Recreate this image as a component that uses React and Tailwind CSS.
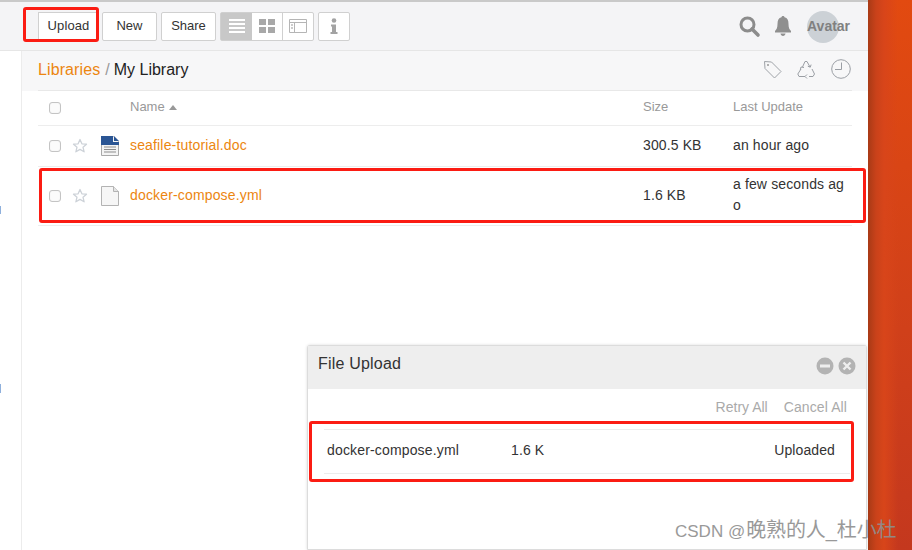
import React from "react";

function Btn({ children, className = "" }) {
  return (
    <button className={"h-[29px] bg-white border border-[#d0d0d0] rounded-[2px] text-[13px] text-[#333] flex items-center justify-center " + className}>
      {children}
    </button>
  );
}

function Star() {
  return (
    <svg width="16" height="16" viewBox="0 0 16 16" fill="none" stroke="#cdd2d8" strokeWidth="1.3" strokeLinejoin="round">
      <path d="M8 1.500l1.900 4.300 4.600.4-3.500 3 1.100 4.600L8 11.400l-4.100 2.400 1.100-4.600-3.500-3 4.600-.4z" />
    </svg>
  );
}

function Check() {
  return <span className="block w-[12px] h-[12px] border border-[#c4c4c4] rounded-[3px] bg-[#fbfbfb] shadow-[inset_0_0_1px_#ddd]" />;
}

function DocIcon() {
  return (
    <svg width="18" height="20" viewBox="0 0 18 20">
      <path d="M.5.5H12.500L17.500 5.500V19.500H.5z" fill="#f4f4f4" stroke="#a9a9a9" />
      <path d="M0 0H12V6H18V9H0z" fill="#2a5594" />
      <path d="M13 0L18 5H13z" fill="#2a5594" />
      <path d="M3 11H15M3 13.500H15M3 16H15" stroke="#8d8d8d" />
    </svg>
  );
}

function BlankIcon() {
  return (
    <svg width="18" height="20" viewBox="0 0 18 20">
      <path d="M.5.5H12.500L17.500 5.500V19.500H.5z" fill="#f6f6f6" stroke="#b3b3b3" />
      <path d="M12.500.5V5.500H17.500" fill="#e4e4e4" stroke="#b3b3b3" />
    </svg>
  );
}

function FileRow({ icon, name, size, time, h }) {
  return (
    <div className={"flex items-center border-b border-[#ededed] text-[14px] " + h}>
      <div className="w-[11px]" />
      <Check />
      <div className="w-[11px]" />
      <Star />
      <div className="w-[5px]" />
      <div className="w-[37px] pl-[8px] flex justify-start">{icon}</div>
      <div className="w-[513px] text-[#ec8610] tracking-[0.16px] -translate-y-[1px]">{name}</div>
      <div className="w-[90px] text-[#333] tracking-[0.12px] -translate-y-[1px]">{size}</div>
      <div className="w-[114px] text-[#333] leading-[21px] break-all tracking-[0.13px] -translate-y-[1px]">{time}</div>
    </div>
  );
}

export default function App() {
  return (
    <div className="relative w-[912px] h-[550px] overflow-hidden flex bg-white font-['Liberation_Sans',Arial,sans-serif]">
      <div className="w-[868px] h-full flex flex-col shrink-0">
        <div className="h-[51px] shrink-0 bg-[#f4f4f6] border-t-2 border-t-[#c9c9c9] border-b border-b-[#e6e6e6] flex items-center pl-[38px] pr-[29px]">
          <Btn className="w-[60px] border-r-0 rounded-none tracking-[0.1px]">Upload</Btn>
          <Btn className="w-[55px] ml-[4px]">New</Btn>
          <Btn className="w-[55px] ml-[4px]">Share</Btn>
          <div className="ml-[4px] w-[94px] h-[29px] flex border border-[#d0d0d0] rounded-[2px] bg-white">
            <div className="w-[31px] bg-[#c8c8c8] flex items-center justify-center">
              <svg width="16" height="14" viewBox="0 0 16 14" fill="#fff"><path d="M0 0h16v2H0zM0 4h16v2H0zM0 8h16v2H0zM0 12h16v2H0z" /></svg>
            </div>
            <div className="w-[31px] border-r border-[#d0d0d0] flex items-center justify-center">
              <svg width="16" height="14" viewBox="0 0 16 14" fill="#a8a8a8"><path d="M0 0h7v6H0zM9 0h7v6H9zM0 8h7v6H0zM9 8h7v6H9z" /></svg>
            </div>
            <div className="flex-1 flex items-center justify-center">
              <svg width="18" height="14" viewBox="0 0 18 14" fill="none" stroke="#b5b5b5"><path d="M.5.500h17v13H.5zM.5 3.500h17M5.500 3.500v10" /><path d="M2 6h2M2 9h2" stroke="#999" /></svg>
            </div>
          </div>
          <Btn className="w-[32px] ml-[4px]">
            <svg width="8" height="16" viewBox="0 0 8 16" fill="#a3a3a3"><circle cx="4" cy="2.500" r="2.300" /><path d="M1 6.500h5V14h1.500v2H.5v-2H2V8.500H1z" /></svg>
          </Btn>
          <div className="flex-1" />
          <svg width="22" height="22" viewBox="0 0 22 22" fill="none" stroke="#8c8c8c" className="mr-[13px] mt-[1px]">
            <circle cx="8.500" cy="8.500" r="6.500" strokeWidth="3" />
            <path d="M13 13L19 19" strokeWidth="3.600" strokeLinecap="round" />
          </svg>
          <svg width="18" height="20" viewBox="0 0 18 20" fill="#8f8f8f" className="mr-[15px]">
            <path d="M9 0c1 0 1.500.6 1.500 1.300C13.500 2 14.500 4.500 14.500 8c0 4 1 5.500 2.500 7v1.500H1V15c1.500-1.500 2.500-3 2.500-7 0-3.500 1-6 4-6.700C7.500.6 8 0 9 0z" />
            <path d="M6.500 17.500h5C11.300 19 10.300 20 9 20s-2.300-1-2.500-2.500z" />
          </svg>
          <div className="w-[32px] h-[32px] rounded-full bg-[#ccd1d6] flex items-center justify-start text-[14px] font-bold text-[#808080] whitespace-nowrap mt-[1px]">
            Avatar
          </div>
        </div>
        <div className="flex-1 flex min-h-0">
          <div className="w-[22px] shrink-0 border-r border-[#ececec] bg-white relative">
            <span className="absolute left-0 top-[155px] w-[1px] h-[8px] bg-[#8fb0dc]" />
            <span className="absolute left-0 top-[333px] w-[1px] h-[9px] bg-[#8fb0dc]" />
          </div>
          <div className="flex-1 flex flex-col min-w-0 relative">
            <div className="h-[40px] shrink-0 bg-[#f7f7f8] pl-[16px] pr-[16px]">
              <div className="h-[40px] border-b border-[#e8e8e8] flex items-center text-[16px]">
                <span className="text-[#ec8610] tracking-[0.1px] -translate-y-[1px]">Libraries</span>
                <span className="text-[#999] ml-[5px] mr-[4px] -translate-y-[1px]">/</span>
                <span className="text-[#222] -translate-y-[1px]">My Library</span>
                <div className="flex-1" />
                <svg width="20" height="20" viewBox="0 0 20 20" fill="none" stroke="#9fa3a8" className="mr-[14px] mb-[2px] -translate-x-[2px]">
                  <path d="M1.500 1.500l7 .5 9.500 9.500-6.500 6.500L2 8.500z" strokeLinejoin="round" />
                  <circle cx="5" cy="5" r="1" fill="#999" stroke="none" />
                </svg>
                <svg width="18" height="19" viewBox="0 0 18 19" fill="none" stroke="#9a9ea4" className="mr-[14px] mb-[3px] -translate-x-[2px]">
                  <path d="M5.500 7L8 1.500h2L13 7M15 9l2.500 5-1.500 2.500h-4M8 16.500H2L.8 14 4 9" />
                  <path d="M10 14.500l-2 2 2 2M10.800 6.200l2.500 1 .8-2.600M7 7.500L4 7l-.7 2.800" />
                </svg>
                <svg width="20" height="20" viewBox="0 0 20 20" fill="none" stroke="#9a9ea4" className="mr-[1px] mb-[3px]">
                  <circle cx="10" cy="10" r="9.300" />
                  <path d="M10.500 3.500V10.500H4" />
                </svg>
              </div>
            </div>
            <div className="px-[16px]">
              <div className="h-[35px] flex items-center border-b border-[#ededed] text-[13px] text-[#999]">
                <div className="w-[11px]" />
                <Check />
                <div className="w-[69px]" />
                <div className="w-[513px] flex items-center gap-[4px] -translate-y-[1px]">
                  Name
                  <svg width="8" height="5" viewBox="0 0 8 5" fill="#999"><path d="M4 0l4 5H0z" /></svg>
                </div>
                <div className="w-[90px] -translate-y-[1px]">Size</div>
                <div className="-translate-y-[1px]">Last Update</div>
              </div>
              <FileRow h="h-[41px]" icon={<DocIcon />} name="seafile-tutorial.doc" size="300.5 KB" time="an hour ago" />
              <FileRow h="h-[59px]" icon={<BlankIcon />} name="docker-compose.yml" size="1.6 KB" time="a few seconds ago" />
            </div>
          </div>
        </div>
      </div>
      <div className="flex-1 h-full bg-[linear-gradient(to_right,#a83a16_0px,#c9421a_8px,#d8451a_16px,rgba(216,69,26,0)_30px),linear-gradient(to_bottom,#e24a10_0%,#d0401a_60%,#c4381e_100%)]" />

      {/* File upload panel */}
      <div className="absolute left-[307px] top-[345px] w-[560px] h-[205px] bg-white border border-[#dcdcdc] rounded-t-[3px] shadow-[0_0_3px_rgba(0,0,0,0.15)] flex flex-col">
        <div className="h-[43px] shrink-0 bg-[#eeeeee] flex items-center pl-[10px] pr-[10px]">
          <span className="text-[16px] text-[#333] -mt-[7px] tracking-[0.2px]">File Upload</span>
          <div className="flex-1" />
          <svg width="18" height="18" viewBox="0 0 18 18" className="mr-[4px] -mt-[3px]"><circle cx="9" cy="9" r="8.500" fill="#b3b3b3" /><path d="M4 7.500h10v3H4z" fill="#eee" /></svg>
          <svg width="18" height="18" viewBox="0 0 18 18" className="-mt-[3px]"><circle cx="9" cy="9" r="8.500" fill="#b3b3b3" /><path d="M5.500 5.500l7 7M12.500 5.500l-7 7" stroke="#eee" strokeWidth="2.400" /></svg>
        </div>
        <div className="h-[40px] shrink-0 flex items-center justify-end gap-[16px] pr-[19px] text-[14px] text-[#aaa] pb-[3px]">
          <span>Retry All</span>
          <span className="tracking-[0.1px]">Cancel All</span>
        </div>
        <div className="ml-[16px] mr-[16px] h-[45px] border-y border-[#ececec] flex items-center text-[14px] text-[#333] pb-[2px]">
          <span className="ml-[3px] w-[184px] tracking-[0.16px]">docker-compose.yml</span>
          <span className="tracking-[0.1px]">1.6 K</span>
          <div className="flex-1" />
          <span className="mr-[15px] text-[#333] tracking-[0.1px]">Uploaded</span>
        </div>
      </div>

      {/* Annotation boxes */}
      <div className="absolute left-[23px] top-[7px] w-[76px] h-[35px] border-[3px] border-[#fb1c13] rounded-[3px]" />
      <div className="absolute left-[39px] top-[168px] w-[827px] h-[55px] border-[3px] border-[#fb1c13] rounded-[3px]" />
      <div className="absolute left-[309px] top-[421px] w-[545px] h-[61px] border-[3px] border-[#fb1c13] rounded-[3px]" />

      {/* Watermark */}
      <div className="absolute left-[675px] top-[519px] text-[17px] leading-[22px] text-[#8f8f8f] opacity-90 whitespace-nowrap font-['Liberation_Sans','Noto_Sans_CJK_SC',sans-serif]">
        CSDN @<span className="text-[20px] ml-[1px] tracking-[-0.1px]">晚熟的人_杜小杜</span>
      </div>
    </div>
  );
}
